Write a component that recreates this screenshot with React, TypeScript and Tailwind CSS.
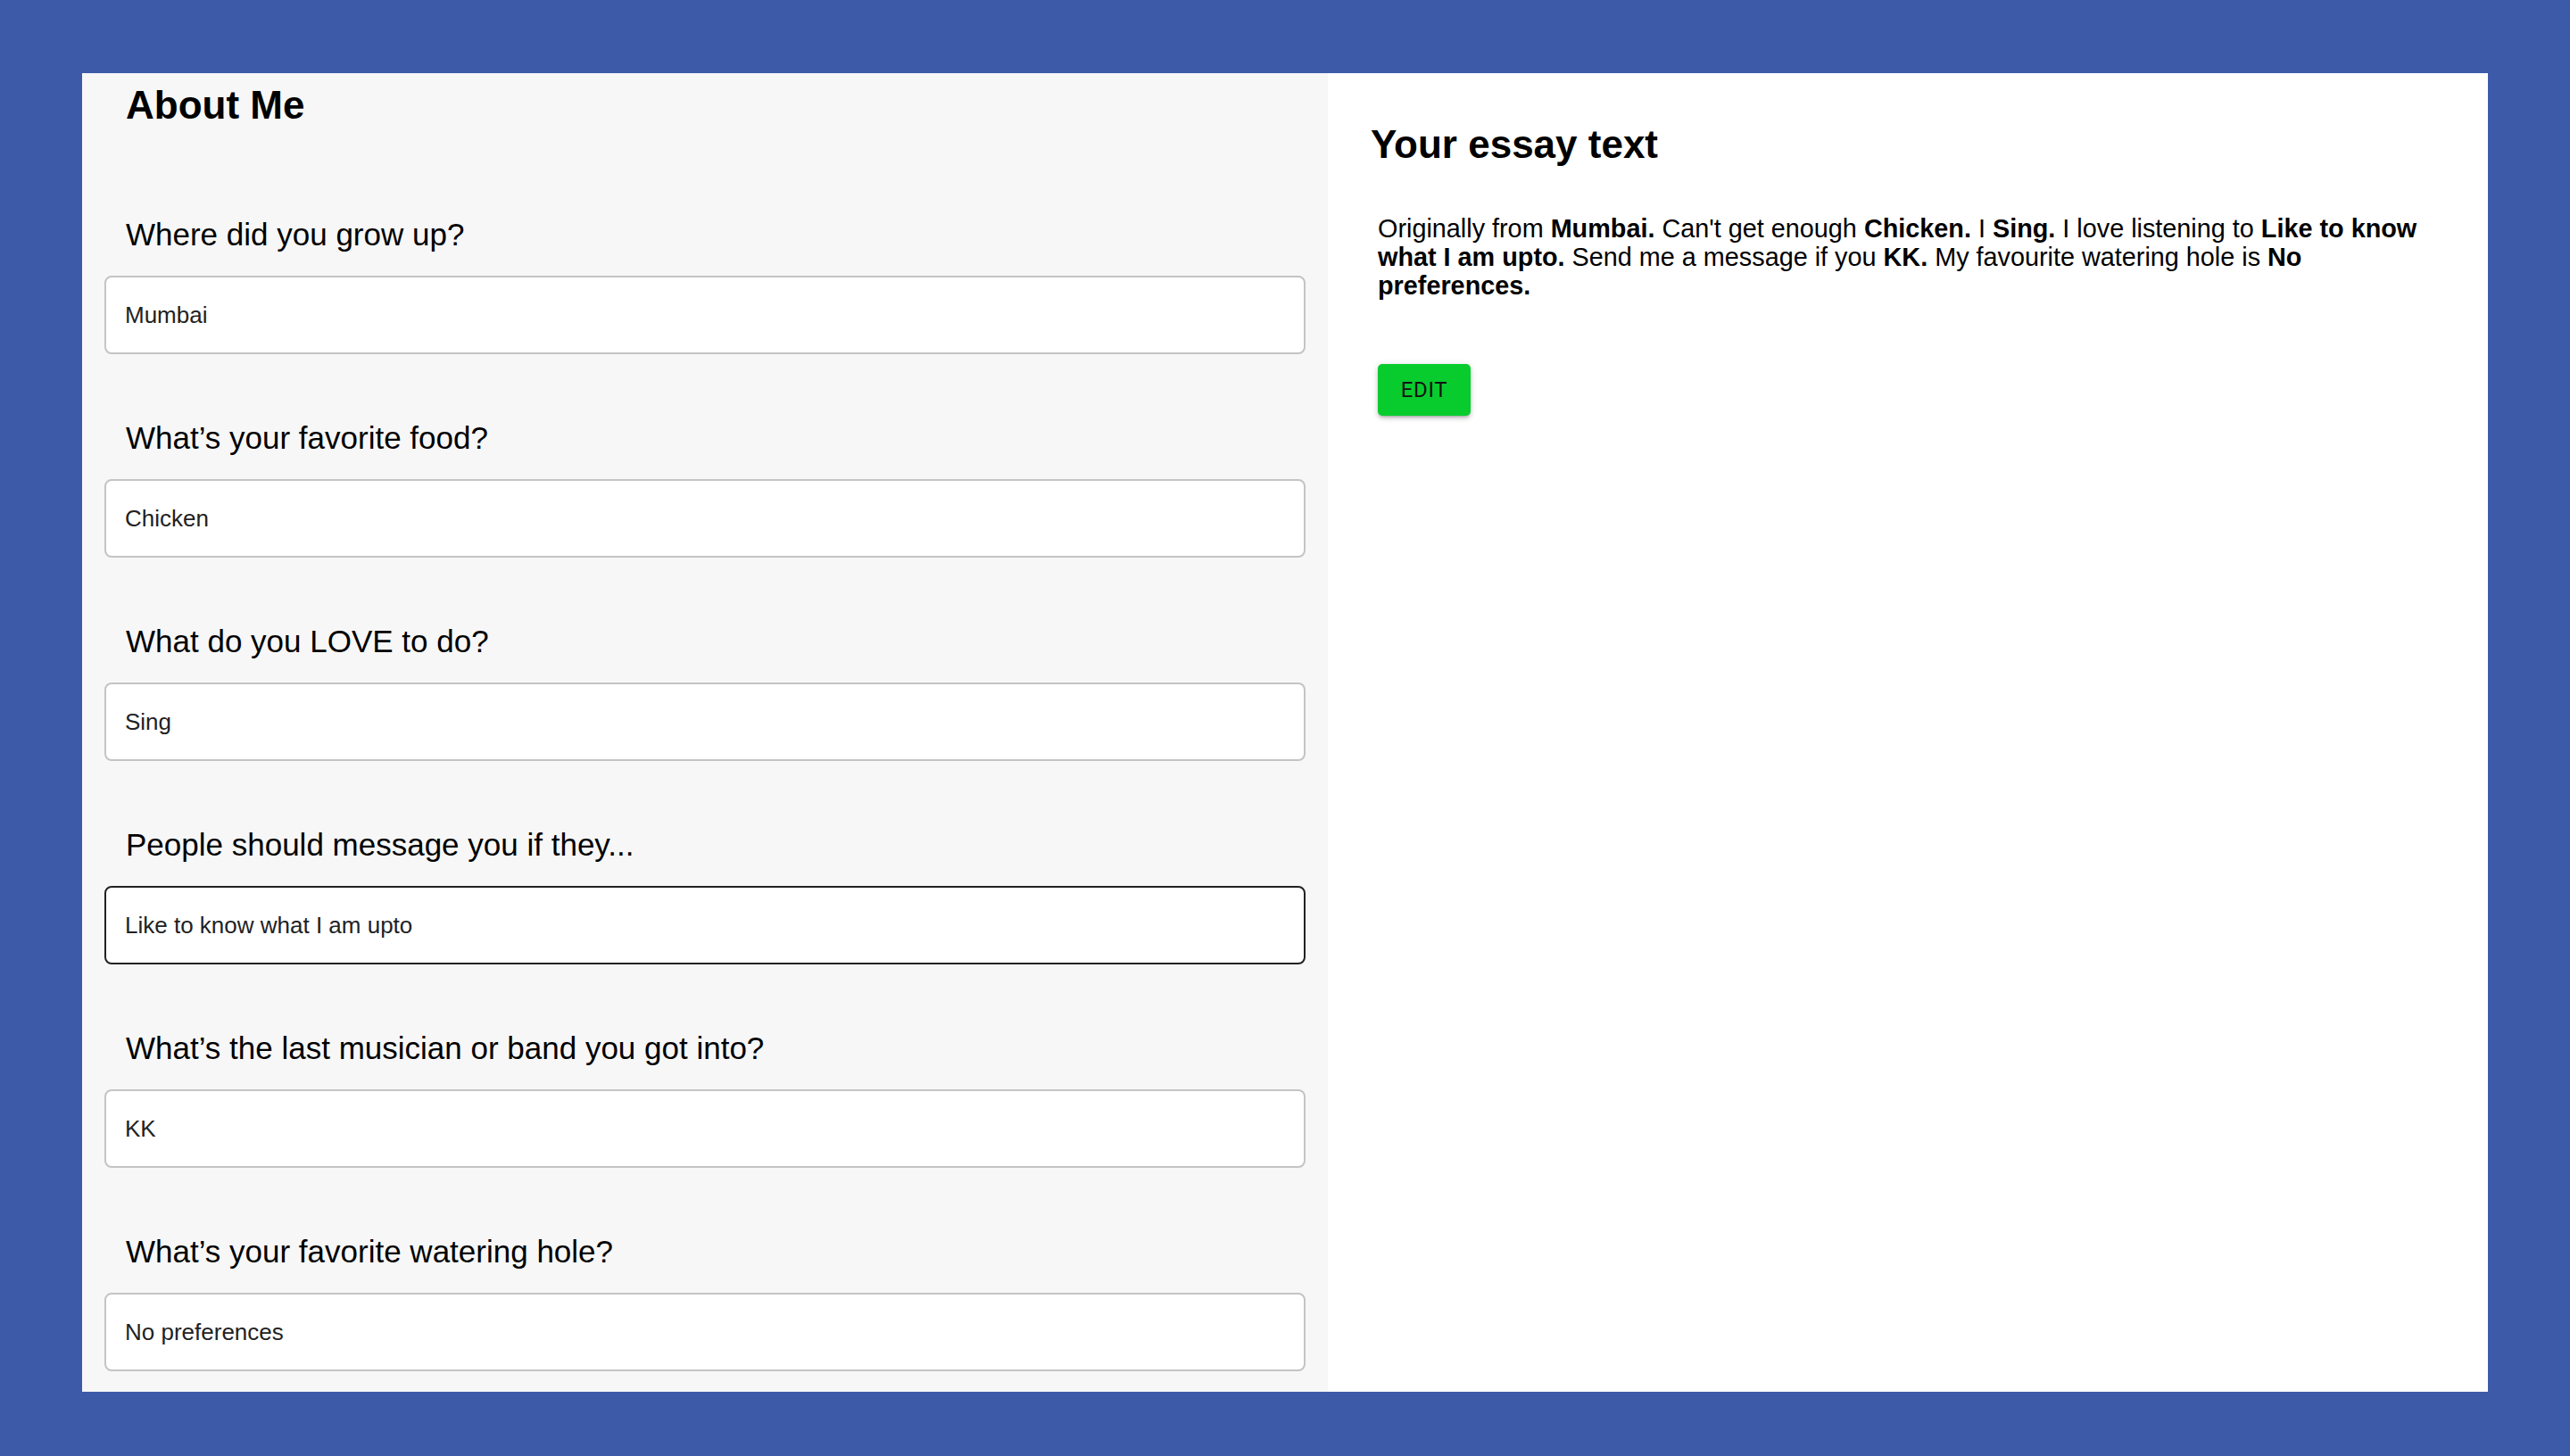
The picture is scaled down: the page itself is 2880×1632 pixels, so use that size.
import React from 'react';

interface FieldProps {
    label: string;
    value: string;
    focused?: boolean;
}
function Field({label, value, focused}: FieldProps) {
    const cnBorder = focused ? 'border-[#222222]' : 'border-[#c4c4c4]'
    return (
        <div className="flex flex-col">
            <label className="pl-[24px] text-[35px] leading-none text-black">{label}</label>
            <input
                type="text"
                defaultValue={value}
                className={'mt-[29px] h-[88px] w-full rounded-lg border-2 bg-white px-[21px] text-[26px] text-[#222222] outline-none ' + cnBorder}
            />
        </div>
    )
}

const fields = [
    {label: 'Where did you grow up?', value: 'Mumbai'},
    {label: 'What\u2019s your favorite food?', value: 'Chicken'},
    {label: 'What do you LOVE to do?', value: 'Sing'},
    {label: 'People should message you if they...', value: 'Like to know what I am upto', focused: true},
    {label: 'What\u2019s the last musician or band you got into?', value: 'KK'},
    {label: 'What\u2019s your favorite watering hole?', value: 'No preferences'},
]

function AboutMe() {
    return (
        <div className="w-[1396px] shrink-0 overflow-hidden bg-[#f7f7f7] px-[25px] pt-[14px]">
            <h2 className="pl-[24px] text-[44px] font-bold leading-none text-black">About Me</h2>
            <div className="mt-[105px] flex flex-col gap-[76px]">
                {fields.map((f) => <Field key={f.label} {...f} />)}
            </div>
        </div>
    )
}

function Essay() {
    return (
        <div className="flex-1 bg-white pl-[48px] pr-[48px] pt-[58px]">
            <h2 className="text-[44px] font-bold leading-none text-black">Your essay text</h2>
            <p className="mx-[8px] mt-[56px] text-[28.8px] leading-[32px] text-black">
                Originally from <b>Mumbai.</b> Can't get enough <b>Chicken.</b> I <b>Sing.</b> I love listening to <b>Like to know what I am upto.</b> Send me a message if you <b>KK.</b> My favourite watering hole is <b>No preferences.</b>
            </p>
            <button className="ml-[8px] mt-[72px] h-[58px] w-[104px] rounded-[5px] bg-[#08cc2e] font-['Roboto',sans-serif] text-[24px] font-normal tracking-[0.02857em] text-[#111111] shadow-[0_3px_3px_-2px_rgba(0,0,0,0.2),0_3px_5px_0_rgba(0,0,0,0.14),0_1px_8px_0_rgba(0,0,0,0.12)]">
                EDIT
            </button>
        </div>
    )
}

function App() {
    return (
        <div className="min-h-screen bg-[#3d5aa9] px-[92px] pt-[82px] pb-[72px] font-['Liberation_Sans',Arial,sans-serif]">
            <div className="flex h-[1478px]">
                <AboutMe />
                <Essay />
            </div>
        </div>
    );
}

export default App;
